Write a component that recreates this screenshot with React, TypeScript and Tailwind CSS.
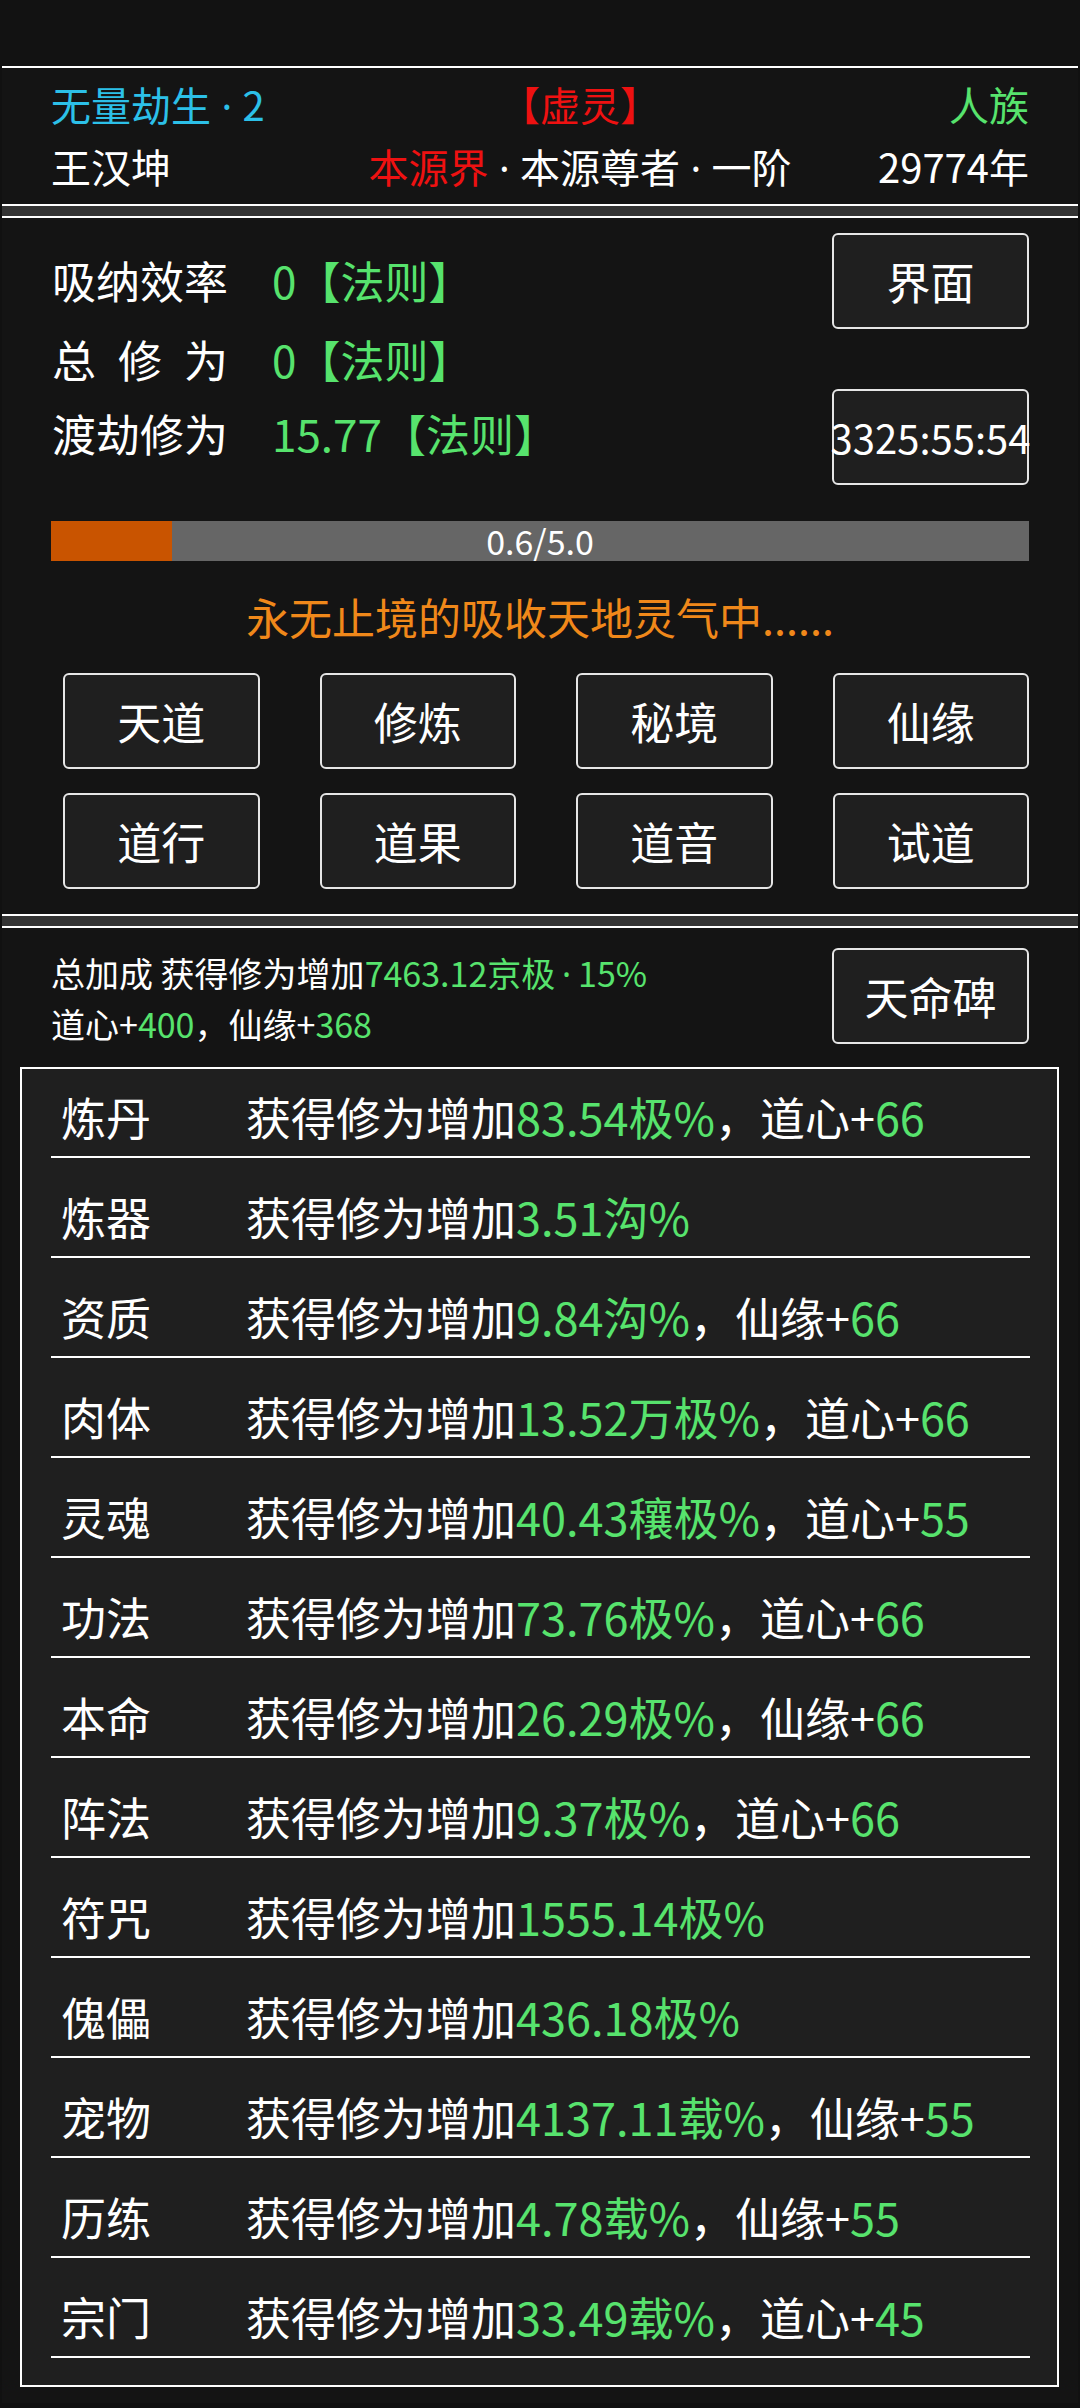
import React from "react";

const rows: { name: string; value: string; extra?: [string, string] }[] = [
  { name: "炼丹", value: "83.54极%", extra: ["道心", "66"] },
  { name: "炼器", value: "3.51沟%" },
  { name: "资质", value: "9.84沟%", extra: ["仙缘", "66"] },
  { name: "肉体", value: "13.52万极%", extra: ["道心", "66"] },
  { name: "灵魂", value: "40.43穰极%", extra: ["道心", "55"] },
  { name: "功法", value: "73.76极%", extra: ["道心", "66"] },
  { name: "本命", value: "26.29极%", extra: ["仙缘", "66"] },
  { name: "阵法", value: "9.37极%", extra: ["道心", "66"] },
  { name: "符咒", value: "1555.14极%" },
  { name: "傀儡", value: "436.18极%" },
  { name: "宠物", value: "4137.11载%", extra: ["仙缘", "55"] },
  { name: "历练", value: "4.78载%", extra: ["仙缘", "55"] },
  { name: "宗门", value: "33.49载%", extra: ["道心", "45"] },
];

const actions = ["天道", "修炼", "秘境", "仙缘", "道行", "道果", "道音", "试道"];

const Btn = ({ children, className = "" }: { children: React.ReactNode; className?: string }) => (
  <div
    className={`flex h-[96px] items-center justify-center whitespace-nowrap rounded-[6px] border-2 border-[#e6e6e6] bg-[#1f1f1f] text-white ${className}`}
  >
    {children}
  </div>
);

// proportional middle dot (the CJK one is full width)
const Dot = ({ pad = "px-[0.26em]" }: { pad?: string }) => (
  <span className={`${pad} font-['Noto_Sans',sans-serif]`}>·</span>
);

const Gap = () => <div className="mx-[2px] h-[10px] bg-[#343434]" />;

const App = () => {
  return (
    <div className="h-[2408px] w-[1080px] overflow-hidden bg-[#111111] font-['Noto_Sans_CJK_SC','Noto_Sans',sans-serif] text-white">
      <div className="h-[66px] bg-[#121212]" />

      {/* header */}
      <div className="mx-[2px] border-y-2 border-white bg-[#141414] px-[49px] pb-[14px] pt-[12px] text-[40px] leading-[48px]">
        <div className="grid grid-cols-[300px_1fr_220px] grid-rows-[48px_48px] gap-y-[14px]">
          <div className="h-[48px] whitespace-nowrap text-[#2cc0e8]">
            无量劫生<Dot />2
          </div>
          <div className="h-[48px] text-center text-[#ee1111]">【虚灵】</div>
          <div className="h-[48px] text-right text-[#57e36d]">人族</div>
          <div className="h-[48px]">王汉坤</div>
          <div className="h-[48px] whitespace-nowrap text-center">
            <span className="text-[#ee1111]">本源界</span>
            <Dot />
            本源尊者
            <Dot />
            一阶
          </div>
          <div className="h-[48px] text-right">29774年</div>
        </div>
      </div>

      <Gap />

      {/* cultivation panel */}
      <div className="mx-[2px] border-y-2 border-white bg-[#141414] pb-[25px] pt-[15px]">
        <div className="flex justify-between pl-[50px] pr-[49px]">
          <div className="flex flex-col pt-[19px] text-[44px] leading-[56px]">
            <div className="flex">
              <span className="w-[220px]">吸纳效率</span>
              <span className="text-[#57e36d]">0【法则】</span>
            </div>
            <div className="mt-[23px] flex">
              <span className="flex w-[176px] justify-between">
                <span>总</span>
                <span>修</span>
                <span>为</span>
              </span>
              <span className="ml-[44px] text-[#57e36d]">0【法则】</span>
            </div>
            <div className="mt-[18px] flex">
              <span className="w-[220px]">渡劫修为</span>
              <span className="text-[#57e36d]">15.77【法则】</span>
            </div>
          </div>
          <div className="flex w-[197px] flex-col gap-[60px]">
            <Btn className="text-[44px]">界面</Btn>
            <Btn className="text-[40px]">3325:55:54</Btn>
          </div>
        </div>

        <div className="relative ml-[49px] mr-[49px] mt-[36px] h-[40px] bg-[#666666]">
          <div className="h-full w-[12.4%] bg-[#c95400]" />
          <div className="absolute inset-0 flex items-center justify-center text-[34px] leading-none text-white">
            0.6/5.0
          </div>
        </div>

        <div className="mt-[27px] text-center text-[43px] leading-[56px] text-[#f0881a]">
          永无止境的吸收天地灵气中......
        </div>

        <div className="ml-[61px] mr-[49px] mt-[29px] grid grid-cols-4 gap-x-[60px] gap-y-[24px]">
          {actions.map((a) => (
            <Btn key={a} className="text-[44px]">
              {a}
            </Btn>
          ))}
        </div>
      </div>

      <Gap />

      {/* bonus panel */}
      <div className="mx-[2px] border-t-2 border-white bg-[#141414] pb-[16px] pt-[19px]">
        <div className="flex items-start justify-between pl-[49px] pr-[49px]">
          <div className="text-[34px] leading-[51px]">
            <div className="h-[51px] whitespace-nowrap">
              总加成 获得修为增加
              <span className="text-[#57e36d]">
                7463.12京极<Dot pad="px-[0.2em]" />15%
              </span>
            </div>
            <div className="h-[51px]">
              道心+<span className="text-[#57e36d]">400</span>，仙缘+<span className="text-[#57e36d]">368</span>
            </div>
          </div>
          <Btn className="mt-[1px] w-[197px] text-[44px]">天命碑</Btn>
        </div>

        <div className="ml-[18px] mr-[19px] mt-[18px] border-2 border-white bg-[#1f1f1f] pb-[27px] pl-[29px] pr-[27px]">
          {rows.map((r, i) => (
            <div
              key={r.name}
              className={`flex border-b-2 border-white text-[45px] leading-[78px] ${i === 0 ? "h-[89px] pt-[9px]" : "h-[100px] pt-[20px]"}`}
            >
              <span className="w-[195px] pl-[10px]">{r.name}</span>
              <span className="whitespace-nowrap">
                获得修为增加<span className="text-[#57e36d]">{r.value}</span>
                {r.extra && (
                  <>
                    ，{r.extra[0]}+<span className="text-[#57e36d]">{r.extra[1]}</span>
                  </>
                )}
              </span>
            </div>
          ))}
        </div>
      </div>
    </div>
  );
};

export default App;
